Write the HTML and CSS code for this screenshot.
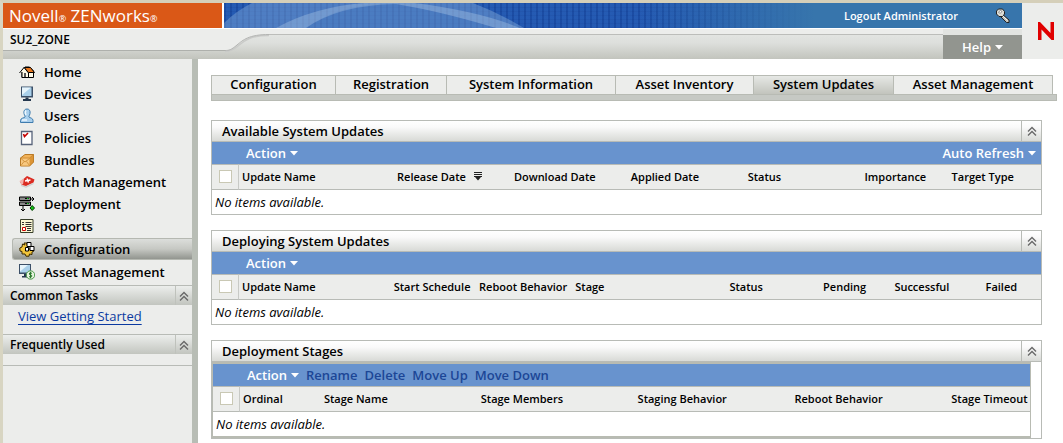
FILE: index.html
```
<!DOCTYPE html>
<html lang="en">
<head>
<meta charset="utf-8">
<title>Novell ZENworks</title>
<link rel="stylesheet" href="styles.css">
</head>
<body>
<svg class="defs" aria-hidden="true">
  <symbol id="chevrons" viewBox="0 0 10 10"><path d="M1 5.5 5 1.5 9 5.5M1 9.5 5 5.5 9 9.5" fill="none" stroke="#686868" stroke-width="1.4"/></symbol>
  <symbol id="caret" viewBox="0 0 8 5"><path d="M0 0H8L4 4.6Z" fill="#fff"/></symbol>
</svg>
<div class="app">
  <header class="header">
    <div class="masthead">
      <div class="top">
        <div class="logo">Novell<small>®</small> ZENworks<small>®</small></div>
        <div class="banner">
          <svg class="arcs" width="420" height="25" viewBox="0 0 420 25" aria-hidden="true">
            <path d="M0 20Q12 8 28 0H249Q275 10 300 25H0Z" fill="#8fb4dc" fill-opacity=".4"/>
            <path d="M52 25Q90 4 140 0H190Q255 8 296 25H272Q215 8 172 1 115 2 82 25Z" fill="#c5dcf0" fill-opacity=".3"/>
            <path d="M82 25Q112 4 150 1.5H172Q222 9 270 25Z" fill="#2a62b0" fill-opacity=".08"/>
          </svg>
          <a class="logout" href="#">Logout Administrator</a>
          <a class="key" href="#" aria-label="Login settings">
            <svg width="16" height="16" viewBox="0 0 16 16"><path d="M7 6 14 12V14.500H11.500L5.500 8.500Z" fill="#c4c4bc" stroke="#222"/><path d="M1.500 3 3.500 1h4L9.500 3.500V6L7.500 8.500H4L1.500 6Z" fill="#ddddd6" stroke="#222"/><path d="M3.500 4 5.500 2.500 7 3.500 5 5.500Z" fill="#fff" stroke="#666" stroke-width=".7"/><path d="M7.500 7.500l5 5" stroke="#f4f4f0"/></svg>
          </a>
        </div>
      </div>
      <div class="subbar">
        <div class="zone">SU2_ZONE</div>
        <svg class="curve" width="44" height="30" viewBox="0 0 44 30" aria-hidden="true"><path d="M0 0H44V5.500C24 5.500 18 11 12 16 6 21 4 21.500 0 21.500Z" fill="#ecedeb"/><path d="M44 6.500C24 6.500 19 12 13 17 7 22 4 22.500 0 22.500" fill="none" stroke="#c9cac8" stroke-width="1.500"/><path d="M44 5.500C24 5.500 18 11 12 16 6 21 4 21.500 0 21.500" fill="none" stroke="#b3b4b2"/></svg>
        <div class="strip"></div>
        <button class="help" type="button">Help <svg width="8" height="5"><use href="#caret"/></svg></button>
      </div>
    </div>
    <div class="brand"><svg width="16" height="18" viewBox="0 0 16 18" role="img" aria-label="Novell"><path d="M0 18V0H2L12.500 11V0H16V18H13.500L3.500 7.500V18Z" fill="#e00000"/></svg></div>
  </header>

  <div class="body">
    <aside class="sidebar">
      <nav class="nav">
        <a href="#"><svg viewBox="0 0 16 16"><path d="M3 6.500V13.500H14.500V7L10.500 3H6Z" fill="#fffbe8" stroke="#000"/><path d="M5 3.500H11.500L15.500 8.500H9.500Z" fill="#e8771e" stroke="#000"/><path d="M.5 9 5 3.500 9.500 9V13.500H3V8" fill="#fffbe8" stroke="#000"/><path d="M5 13V9h2v4" fill="#555"/></svg>Home</a>
        <a href="#"><svg viewBox="0 0 16 16"><path d="M2 .5H14V11.500H2Z" fill="#3c5068"/><path d="M3 1.500H12.500V10H3Z" fill="#a9d0ea"/><path d="M3 1.500H12L3 9Z" fill="#e6f4fb"/><path d="M6.500 11.500h3V13H12v2H4v-2h2.500Z" fill="#25384e"/></svg>Devices</a>
        <a href="#"><svg viewBox="0 0 16 16"><path d="M8 1C5.500 1 4.500 3 5 5.500 5.500 8 6.500 8 6 9 5 10 1.500 10 1.500 12.500V14.500H14V12.500C14 10 11 10 10 9 9.500 8 10.500 8 11 5.500 11.500 3 10.500 1 8 1Z" fill="#a9cfec" stroke="#3f7cae"/><path d="M7 2.500Q5.500 4 7 7M3 12h5" fill="none" stroke="#eef8ff" stroke-width="1.500"/></svg>Users</a>
        <a href="#"><svg viewBox="0 0 16 16"><path d="M2.500 1.500H13V14.500H2.500Z" fill="#fff" stroke="#57637a" stroke-width="1.300"/><path d="M4.500 4 5.500 6.500 9 3" fill="none" stroke="#c40000" stroke-width="1.600"/></svg>Policies</a>
        <a href="#"><svg viewBox="0 0 16 16"><path d="M1.500 6 6 2.500H14.500V10L10.500 14H1.500Z" fill="#f2b35a" stroke="#b97a26"/><path d="M1.500 6H10.500L14.500 2.500V10L10.500 14Z" fill="#dc9536" stroke="#b97a26" stroke-width=".6"/><path d="M2 6.500H10.500V13.500H2Z" fill="#f8c880"/><path d="M2 6.500 6 10 10.500 6.500M2 13.500 5 9.500M10.500 13.500 7.500 9.500" fill="none" stroke="#c98a34" stroke-width=".8"/></svg>Bundles</a>
        <a href="#"><svg viewBox="0 0 16 16"><path d="M1 8 8 2 15.500 5.500 14.500 8.500 7 12 3 11Z" fill="#db2b20"/><path d="M.5 7 5 4.500 4 10.500 2 10Z" fill="#f4b3ad"/><path d="M2 11.500 7 13 14.500 9.500" fill="none" stroke="#ccc" stroke-width="1.200"/><path d="M6 7 11.500 6M8 4.500l1.500 4" stroke="#fff" stroke-width="1.500"/></svg>Patch Management</a>
        <a href="#"><svg viewBox="0 0 16 16"><path d="M.5 1h11v3.500H.5ZM.5 6h11v3.500H.5Z" fill="#8a8a8a" stroke="#000"/><path d="M6 2.500h4M6 7.500h4" stroke="#000"/><path d="M8 2.500h1.500M8 7.500h1.500" stroke="#10d020"/><path d="M11 3h4M13 1l2 2-2 2M4 9.500v5.500M2 13l2 2 2-2" fill="none" stroke="#000"/><path d="M13.200 9.500 15.500 12 13.200 14.500 11 12Z" fill="#12c312" stroke="#003a00"/></svg>Deployment</a>
        <a href="#"><svg viewBox="0 0 16 16"><path d="M1.500 1.500H14V14.500H1.500Z" fill="#fbf8d5" stroke="#38402b"/><path d="M3 4.500h2M3 6.500h2M6.500 4.500h6M6.500 6.500h6M6.500 8.500h6M8 10.500h4M8 12.500h4" stroke="#333"/><path d="M3.500 9.500h3v3h-3Z" fill="#fff" stroke="#c00"/></svg>Reports</a>
        <a class="current" href="#" aria-current="page"><svg viewBox="0 0 16 16"><path d="M5 2 6 4 3.500 3 3 6 .8 7 1 10 3 10.500 3 13 6 13 7 15.200H10L10.500 13 13 13.500 13 11 15 10 14 8 9 8 8 2Z" fill="#f2c53a" stroke="#3b2a00"/><path d="M6.500 6.500h3V10h-3Z" fill="#fff" stroke="#000"/><path d="M8 1.500h4v4H8ZM11 5.500h4v4h-4Z" fill="#fff" stroke="#000"/></svg>Configuration</a>
        <a href="#"><svg viewBox="0 0 16 16"><path d="M0 0H12V10H0Z" fill="#3c5068"/><path d="M1 1H11V8.500H1Z" fill="#a9d0ea"/><path d="M1 1H9L1 7.500Z" fill="#e6f4fb"/><path d="M5 10h3v2h1v1.500H3V12h2Z" fill="#25384e"/><circle cx="11.500" cy="11" r="4.200" fill="#e6f4de" stroke="#4a9a4b"/><path d="M13 9.300Q10 8.200 10.200 10 10.500 11 12 11 13.500 11.500 12.500 12.800 11 13.500 10 12.500M11.500 7.800v6.500" fill="none" stroke="#2b7a2d"/></svg>Asset Management</a>
      </nav>
      <section class="side-panel">
        <div class="side-head"><h2>Common Tasks</h2><button type="button" aria-label="Collapse Common Tasks"><svg width="10" height="10"><use href="#chevrons"/></svg></button></div>
        <div class="side-body"><a href="#">View Getting Started</a></div>
      </section>
      <section class="side-panel used">
        <div class="side-head"><h2>Frequently Used</h2><button type="button" aria-label="Collapse Frequently Used"><svg width="10" height="10"><use href="#chevrons"/></svg></button></div>
      </section>
    </aside>

    <main class="content">
      <nav class="tabs">
        <a href="#">Configuration</a>
        <a href="#">Registration</a>
        <a href="#">System Information</a>
        <a href="#">Asset Inventory</a>
        <a class="active" href="#" aria-current="page">System Updates</a>
        <a href="#">Asset Management</a>
      </nav>
      <div class="tab-base"></div>

      <section class="panel">
        <div class="panel-head"><h2>Available System Updates</h2><button type="button" aria-label="Collapse Available System Updates"><svg width="10" height="10"><use href="#chevrons"/></svg></button></div>
        <div class="toolbar">
          <button type="button">Action <svg width="8" height="5"><use href="#caret"/></svg></button>
          <button class="refresh" type="button">Auto Refresh <svg width="8" height="5"><use href="#caret"/></svg></button>
        </div>
        <table class="available">
          <thead><tr><th class="check"><input type="checkbox" aria-label="Select all available updates"></th><th>Update Name</th><th>Release Date <svg class="sort" width="8" height="9" viewBox="0 0 8 9" aria-hidden="true"><path d="M0 .5H8M0 2.500H8M0 4.500H8" stroke="#222"/><path d="M1 5H7L4 8.500Z" fill="#222"/></svg></th><th>Download Date</th><th>Applied Date</th><th>Status</th><th>Importance</th><th>Target Type</th></tr></thead>
          <tbody><tr><td colspan="8">No items available.</td></tr></tbody>
        </table>
      </section>

      <section class="panel">
        <div class="panel-head"><h2>Deploying System Updates</h2><button type="button" aria-label="Collapse Deploying System Updates"><svg width="10" height="10"><use href="#chevrons"/></svg></button></div>
        <div class="toolbar">
          <button type="button">Action <svg width="8" height="5"><use href="#caret"/></svg></button>
        </div>
        <table class="deploying">
          <thead><tr><th class="check"><input type="checkbox" aria-label="Select all deploying updates"></th><th>Update Name</th><th>Start Schedule</th><th>Reboot Behavior</th><th>Stage</th><th>Status</th><th>Pending</th><th>Successful</th><th>Failed</th></tr></thead>
          <tbody><tr><td colspan="9">No items available.</td></tr></tbody>
        </table>
      </section>

      <section class="panel">
        <div class="panel-head"><h2>Deployment Stages</h2><button type="button" aria-label="Collapse Deployment Stages"><svg width="10" height="10"><use href="#chevrons"/></svg></button></div>
        <div class="inset">
          <div class="toolbar">
            <button type="button">Action <svg width="8" height="5"><use href="#caret"/></svg></button>
            <button type="button" disabled>Rename</button>
            <button type="button" disabled>Delete</button>
            <button type="button" disabled>Move Up</button>
            <button type="button" disabled>Move Down</button>
          </div>
          <table class="stages">
            <thead><tr><th class="check"><input type="checkbox" aria-label="Select all stages"></th><th>Ordinal</th><th>Stage Name</th><th>Stage Members</th><th>Staging Behavior</th><th>Reboot Behavior</th><th>Stage Timeout</th></tr></thead>
            <tbody><tr><td colspan="7">No items available.</td></tr></tbody>
          </table>
        </div>
      </section>
    </main>
  </div>
</div>
</body>
</html>
```

FILE: styles.css
```
* { box-sizing: border-box; }
body {
  margin: 0;
  background: #fff;
  color: #000;
  font-family: "Open Sans", "Noto Sans", sans-serif;
  font-size: 12px;
}
a { color: inherit; text-decoration: none; }
h2 { margin: 0; font-size: 12px; font-weight: 600; }
button {
  display: inline-flex;
  align-items: center;
  justify-content: center;
  padding: 0;
  border: 0;
  background: none;
  color: inherit;
  font: inherit;
}
.defs { position: absolute; width: 0; height: 0; }

.app {
  display: flex;
  flex-direction: column;
  min-height: 100vh;
  border-top: 3px solid #d5cfb9;
  border-left: 3px solid #d8d5c2;
}

/* Header */
.header { display: flex; height: 56px; }
.masthead { flex: 1; display: flex; flex-direction: column; }
.top { display: flex; height: 26px; border-bottom: 1px solid #fff; }
.logo {
  width: 221px;
  padding-left: 6px;
  border-right: 2px solid #fff;
  background: #da5817;
  color: #fff;
  font-size: 17px;
  line-height: 25px;
}
.logo small { font-size: 9px; }
.banner {
  position: relative;
  flex: 1;
  display: flex;
  align-items: center;
  justify-content: flex-end;
  gap: 37px;
  padding-right: 11px;
  color: #fff;
  font-size: 11px;
  font-weight: 600;
  background:
    linear-gradient(90deg, rgba(55, 117, 172, 0) 52%, #3775ac 74%),
    repeating-linear-gradient(90deg, rgba(8, 40, 120, .22) 0 2px, rgba(80, 130, 210, .08) 2px 6px),
    repeating-linear-gradient(0deg, rgba(10, 40, 120, .1) 0 1px, transparent 1px 4px),
    #2157b0;
}
.arcs { position: absolute; left: 0; top: 0; }
.logout, .key { position: relative; }
.key svg { display: block; }
.subbar {
  flex: 1;
  display: flex;
  background: linear-gradient(#e2e4e1 6px, #dddfdc 14px, #c2c4bd 30px);
}
.zone {
  width: 222px;
  height: 22px;
  padding-left: 7px;
  border-bottom: 1px solid #aeb0ac;
  background: #ecedeb;
  font-size: 12px;
  font-weight: 600;
  line-height: 21px;
}
.strip { flex: 1; height: 6px; border-bottom: 1px solid #bcbdba; background: #ecedeb; }
.help {
  align-self: flex-end;
  gap: 4px;
  width: 79px;
  height: 24px;
  background: #92958f;
  color: #fff;
  font-size: 13px;
  font-weight: 600;
}
.brand { display: flex; align-items: center; width: 41px; padding: 0 0 0 16px; background: #ecedeb; }

.body { flex: 1; display: flex; }

/* Sidebar */
.sidebar { flex: none; width: 195px; border-right: 6px solid #b8bdb5; background: #ecedeb; }
.nav { padding: 2px 0; font-size: 13px; font-weight: 600; }
.nav a {
  display: flex;
  align-items: center;
  gap: 9px;
  height: 22px;
  margin-left: 9px;
  padding-left: 7px;
}
.nav svg { width: 16px; height: 16px; }
.nav .current {
  margin-top: 1px;
  margin-bottom: 1px;
  padding-left: 6px;
  border: 1px solid #b5b8b1;
  border-right: 0;
  border-radius: 3px 0 0 3px;
  background: linear-gradient(#dcdedb, #c6c8c3 50%, #92958f);
}
.side-head {
  display: flex;
  height: 20px;
  border-top: 1px solid #b8bbb6;
  background: linear-gradient(#eceeec, #c2c5bf);
}
.side-head h2 { flex: 1; padding-left: 7px; line-height: 19px; }
.side-head button { width: 17px; border-left: 1px solid #bfc2bc; }
.side-body { height: 29px; padding-left: 15px; font-size: 13px; line-height: 22px; }
.side-body a { color: #0b3aa0; text-decoration: underline; text-underline-offset: 3px; }
.used { height: 32px; border-bottom: 1px solid #b8bbb6; }

/* Content */
.content { flex: 1; min-width: 0; padding: 16px 6px 5px 13px; }
.tabs {
  display: grid;
  grid-template-columns: 123fr 111fr 169fr 138fr 140fr 159fr;
  height: 19px;
  margin-right: 4px;
  border: solid #b8bbb4;
  border-width: 1px 1px 0;
  background: #ecedeb;
  font-size: 13px;
  font-weight: 600;
  line-height: 17px;
  text-align: center;
}
.tabs a + a { border-left: 1px solid #b8bbb4; }
.tabs .active { background: linear-gradient(#e6e8e5, #c2c4bd); }
.tab-base { height: 7px; border: 1px solid #b8bbb4; background: #c6c9c4; }

.panel { margin: 19px 15px 0 0; border: 1px solid #b8bbb6; }
.panel + .panel { margin-top: 15px; }
.panel-head {
  display: flex;
  height: 21px;
  border-bottom: 1px solid #b8bbb6;
  background: linear-gradient(#fff, #fafafa 30%, #d8dad6);
}
.panel-head h2 { flex: 1; padding-left: 10px; font-size: 13px; line-height: 20px; }
.panel-head button { width: 20px; border-left: 1px solid #b8bbb6; }
.toolbar {
  display: flex;
  gap: 7px;
  height: 22px;
  padding: 0 5px 0 34px;
  background: #6893ce;
  color: #fff;
  font-size: 13px;
  font-weight: 600;
}
.toolbar button { gap: 4px; }
.toolbar button:disabled { color: #1c4696; }
.toolbar .refresh { margin-left: auto; }

table { width: 100%; table-layout: fixed; border-collapse: separate; border-spacing: 0; }
th, td { padding: 0 0 0 3px; text-align: left; white-space: nowrap; }
th {
  height: 26px;
  padding-bottom: 1px;
  border-top: 1px solid #b8bbb6;
  border-bottom: 1px solid #b8bbb6;
  background: #ecedeb;
  font-size: 11px;
  font-weight: 600;
}
td { height: 24px; font-size: 13px; font-style: italic; }
.check { width: 27px; padding-left: 7px; border-right: 1px solid #c8cac6; }
.check input {
  display: block;
  appearance: none;
  width: 13px;
  height: 13px;
  margin: 0;
  border: 1px solid #c9c8b4;
  background: #fff;
}
.sort { margin-left: 5px; }

/* The last column of each table takes the remaining width */
.available th:nth-child(2) { width: 18.7%; }
.available th:nth-child(n+3) { width: 14.1%; }
.available th:nth-child(7) { width: 10.5%; }
.available th:nth-child(8) { width: auto; }

.deploying th:nth-child(2) { width: 18.3%; }
.deploying th:nth-child(3) { width: 10.3%; }
.deploying th:nth-child(4) { width: 11.6%; }
.deploying th:nth-child(5) { width: 18.6%; }
.deploying th:nth-child(6) { width: 11.3%; }
.deploying th:nth-child(7) { width: 8.6%; }
.deploying th:nth-child(8) { width: 11%; }

.inset { margin-right: 10px; border: solid #b8bbb2; border-width: 2px 1px 2px 1px; }
.stages th:nth-child(2) { width: 9.9%; }
.stages th:nth-child(n+3) { width: 19.2%; }
.stages th:nth-child(7) { width: auto; }
```
